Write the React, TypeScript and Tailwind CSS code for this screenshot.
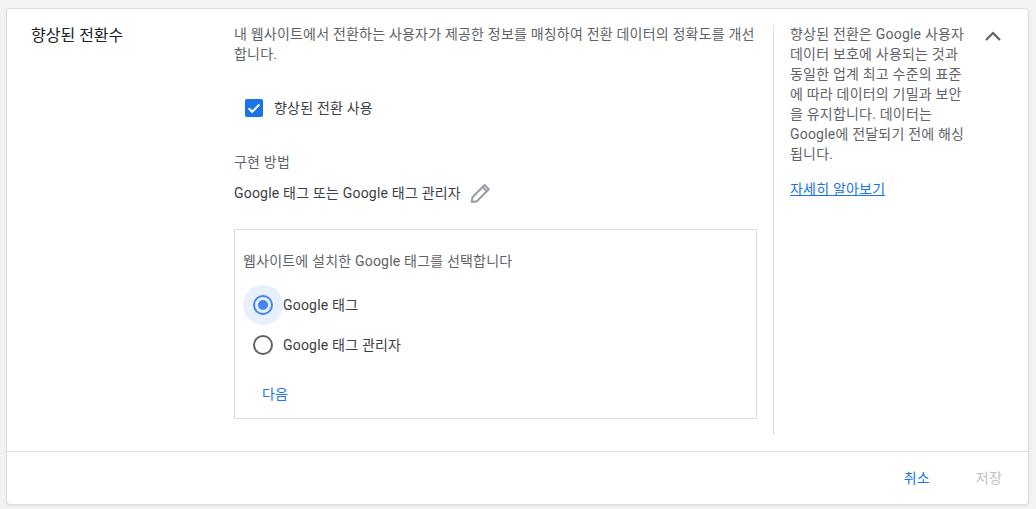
export default function App() {
  const font = { fontFamily: 'Roboto, "Noto Sans CJK KR", sans-serif' };
  return (
    <div className="w-[1036px] h-[509px] overflow-hidden bg-[#f1f3f4] pt-[8px] px-[6px] tracking-[0.2px]" style={font}>
      <div className="w-[1023px] h-[497px] bg-white rounded-[4px] border border-[#dadce0] shadow-[0_1px_2px_rgba(60,64,67,0.1)] flex flex-col">
        <div className="h-[443px] flex border-b border-[#dadce0] shrink-0">
          <div className="w-[227px] shrink-0 pl-[24px] pt-[15px] text-[16px] leading-[24px] text-[#202124] tracking-normal">향상된 전환수</div>
          <div className="w-[523px] shrink-0 pt-[16px] text-[14px] text-[#3c4043]">
            <p className="leading-[19.5px] text-[#5f6368] mb-[34px]">내 웹사이트에서 전환하는 사용자가 제공한 정보를 매칭하여 전환 데이터의 정확도를 개선합니다.</p>
            <label className="flex items-center ml-[11px] h-[20px]">
              <span className="w-[18px] h-[18px] rounded-[2px] bg-[#1a73e8] flex items-center justify-center">
                <svg width="16" height="16" viewBox="0 0 16 16" fill="none"><path d="M2.6 8.2 6.2 11.8 13.4 4.5" stroke="#fff" strokeWidth="2" /></svg>
              </span>
              <span className="ml-[11px] leading-[20px]">향상된 전환 사용</span>
            </label>
            <div className="mt-[34px] leading-[20px] text-[#5f6368]">구현 방법</div>
            <div className="flex items-center mt-[11px] h-[20px]">
              <span className="leading-[20px]">Google 태그 또는 Google 태그 관리자</span>
              <svg className="ml-[8px]" width="22" height="22" viewBox="0 0 22 22" fill="none">
                <path d="M2.8 20 3.4 15.2 15.6 3 19.8 7.2 7.6 19.4Z M13.6 5 17.8 9.2" stroke="#9aa0a6" strokeWidth="2.1" strokeLinejoin="round" />
              </svg>
            </div>
            <div className="mt-[26px] h-[190px] border border-[#dadce0] pl-[8px] pt-[21px]">
              <div className="leading-[20px] text-[#5f6368]">웹사이트에 설치한 Google 태그를 선택합니다</div>
              <div className="flex items-center mt-[14px] h-[40px]">
                <span className="w-[40px] h-[40px] rounded-full bg-[#e8f0fe] flex items-center justify-center shrink-0">
                  <span className="w-[20px] h-[20px] rounded-full border-2 border-[#4285f4] flex items-center justify-center">
                    <span className="w-[10px] h-[10px] rounded-full bg-[#4285f4]" />
                  </span>
                </span>
                <span className="leading-[20px]">Google 태그</span>
              </div>
              <div className="flex items-center h-[40px]">
                <span className="w-[40px] h-[40px] flex items-center justify-center shrink-0">
                  <span className="w-[20px] h-[20px] rounded-full border-2 border-[#5f6368]" />
                </span>
                <span className="leading-[20px]">Google 태그 관리자</span>
              </div>
              <div className="mt-[19px] ml-[19px] leading-[20px] text-[#1a73e8]">다음</div>
            </div>
          </div>
          <div className="w-[207px] shrink-0 ml-[16px] mt-[16px] h-[410px] border-l border-[#dadce0] pl-[16px] pr-[13px] text-[14px] leading-[19.92px] text-[#5f6368]">
            <p>향상된 전환은 Google 사용자 데이터 보호에 사용되는 것과 동일한 업계 최고 수준의 표준에 따라 데이터의 기밀과 보안을 유지합니다. 데이터는 Google에 전달되기 전에 해싱됩니다.</p>
            <a className="block mt-[15.5px] text-[#1a73e8] underline">자세히 알아보기</a>
          </div>
          <div className="pt-[15px] pl-[1px]">
            <svg width="24" height="24" viewBox="0 0 24 24" fill="none"><path d="M5 16 12 9 19 16" stroke="#5f6368" strokeWidth="2.2" /></svg>
          </div>
        </div>
        <div className="flex justify-end items-center gap-[46px] pr-[26px] h-[53px] text-[14px] leading-[20px]">
          <span className="text-[#1a73e8]">취소</span>
          <span className="text-[#bdc1c6]">저장</span>
        </div>
      </div>
    </div>
  );
}
